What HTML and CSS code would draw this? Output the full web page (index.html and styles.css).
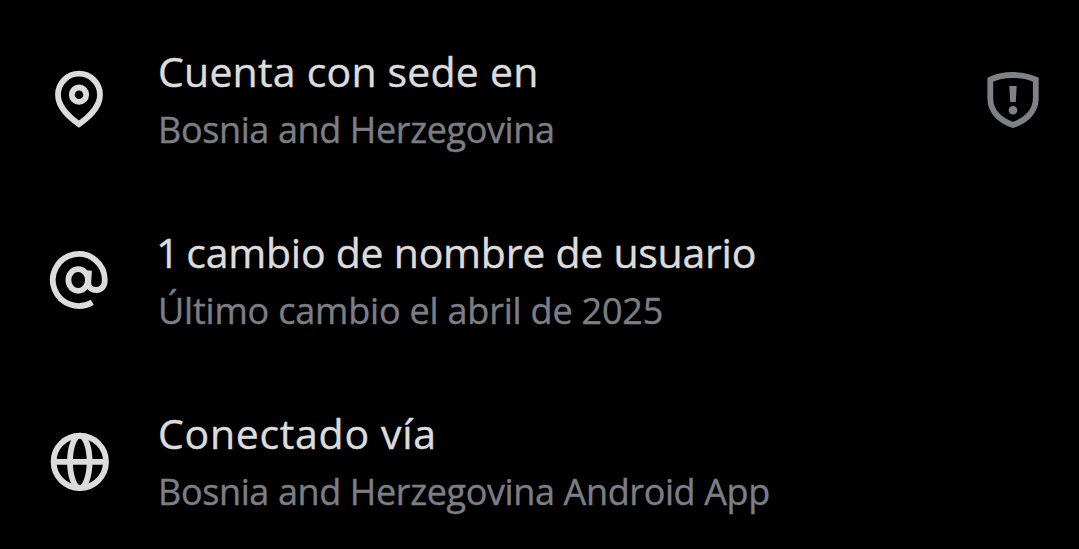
FILE: index.html
```html
<!DOCTYPE html>
<html lang="es">
<head>
  <meta charset="UTF-8">
  <meta name="viewport" content="width=device-width, initial-scale=1.0">
  <title>Información de la cuenta</title>
  <link rel="stylesheet" href="styles.css">
</head>
<body>
  <div class="info-list">
    <div class="info-row location">
      <svg class="icon" viewBox="0 0 80 80">
        <path d="M39 64.2C31.5 58.7 18 48.5 18 34.7a21 21 0 0 1 42 0C60 48.5 46.5 58.7 39 64.2z"/>
        <circle cx="39" cy="34.7" r="7.2"/>
      </svg>
      <div class="info-text">
        <div class="title">Cuenta con sede en</div>
        <div class="subtitle">Bosnia and Herzegovina</div>
      </div>
      <svg class="icon shield" viewBox="0 0 80 80">
        <path d="M40 15c8.5 0 16.5 1.7 22.8 4.7v18.8c0 13-9.8 22.2-22.8 26.5-13-4.300-22.700-13.500-22.700-26.500V19.700C23.500 16.700 31.500 15 40 15z"/>
        <path class="fill" d="M36.3 26h7.400l-.9 16h-5.600z"/>
        <circle class="fill" cx="40" cy="50.2" r="4.3"/>
      </svg>
    </div>

    <div class="info-row username">
      <svg class="icon" viewBox="0 1 80 80">
        <path d="M52.3 62.2A26 26 0 1 1 64.8 39.8C64.8 46.5 61.5 50 56.5 50c-5.5 0-8.500-3-8.200-8l.7-11.500"/>
        <ellipse cx="38.2" cy="40" rx="9.8" ry="10.8"/>
      </svg>
      <div class="info-text">
        <div class="title"><span class="count">1 </span>cambio de nombre de usuario</div>
        <div class="subtitle">Último cambio el abril de 2025</div>
      </div>
    </div>

    <div class="info-row connected">
      <svg class="icon" viewBox="0 0 80 80">
        <circle cx="39.8" cy="39.8" r="26.2"/>
        <ellipse cx="39.8" cy="39.8" rx="9.8" ry="26.2"/>
        <path d="M13.6 39.8h52.4"/>
      </svg>
      <div class="info-text">
        <div class="title">Conectado vía</div>
        <div class="subtitle">Bosnia and Herzegovina Android App</div>
      </div>
    </div>
  </div>
</body>
</html>
```
FILE: styles.css
```css
body {
  margin: 0;
  background-color: #000;
  color: #dcdcdc;
  font-family: 'Open Sans', sans-serif;
  overflow: hidden;
}
.info-list {
  display: flex;
  flex-direction: column;
  gap: 61px;
  padding: 40px 26px 0 40px;
}
.info-row {
  display: flex;
  align-items: center;
  height: 120px;
}
.icon {
  flex: none;
  width: 80px;
  height: 80px;
  fill: none;
  stroke: #dcdcdc;
  stroke-width: 5.8;
}
.shield {
  stroke: #7c8288;
}
.fill {
  fill: #7c8288;
  stroke: none;
}
.info-text {
  flex: 1;
  padding-left: 38px;
  white-space: nowrap;
  -webkit-text-stroke: 0.4px;
}
.title {
  font-size: 41px;
  line-height: 58px;
  margin-bottom: 2px;
}
.subtitle {
  color: #7b7e84;
  font-size: 36px;
  line-height: 56px;
  letter-spacing: -0.38px;
}
.location .title {
  letter-spacing: 0.21px;
}
.username .title {
  letter-spacing: -0.24px;
  text-indent: -2px;
}
.username .subtitle {
  letter-spacing: -0.2px;
}
.connected .title {
  letter-spacing: 0.7px;
}
.username .count {
  letter-spacing: -1.9px;
}
```
